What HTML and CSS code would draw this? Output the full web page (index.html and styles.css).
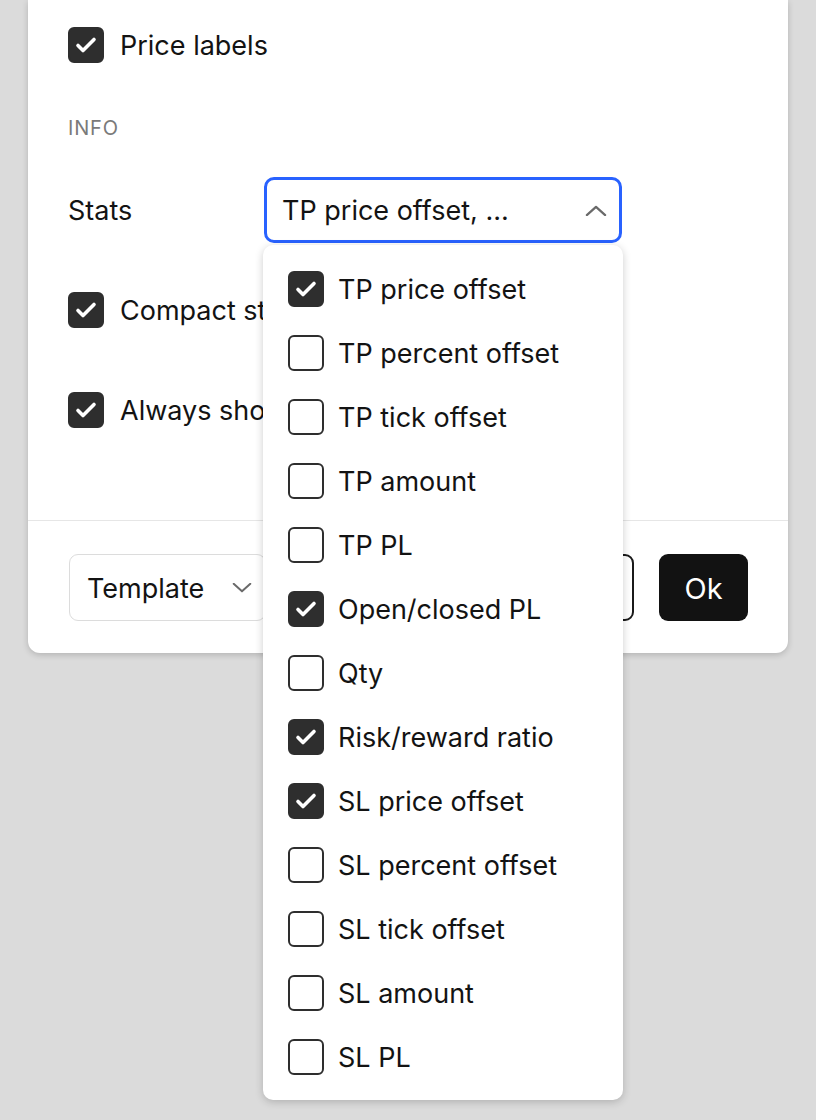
FILE: index.html
```html
<!DOCTYPE html>
<html>
<head>
<meta charset="utf-8">
<link rel="stylesheet" href="styles.css">
</head>
<body>
<div class="dialog">
  <div class="content">
    <label class="check-row row-first">
      <span class="cb checked"><svg viewBox="0 0 36 36"><path d="M10 18.5l5 5 11-11" /></svg></span>
      <span class="label">Price labels</span>
    </label>
    <div class="section-title">INFO</div>
    <div class="field-row">
      <span class="field-label">Stats</span>
      <div class="select-wrap">
        <div class="select open">
          <span class="select-value">TP price offset, ...</span>
          <svg class="chev" viewBox="0 0 24 12"><path d="M2 11l10-9 10 9" /></svg>
        </div>
        <div class="menu">
          <div class="item"><span class="cb checked"><svg viewBox="0 0 36 36"><path d="M10 18.5l5 5 11-11" /></svg></span><span class="label">TP price offset</span></div>
          <div class="item"><span class="cb"></span><span class="label">TP percent offset</span></div>
          <div class="item"><span class="cb"></span><span class="label">TP tick offset</span></div>
          <div class="item"><span class="cb"></span><span class="label">TP amount</span></div>
          <div class="item"><span class="cb"></span><span class="label">TP PL</span></div>
          <div class="item"><span class="cb checked"><svg viewBox="0 0 36 36"><path d="M10 18.5l5 5 11-11" /></svg></span><span class="label">Open/closed PL</span></div>
          <div class="item"><span class="cb"></span><span class="label">Qty</span></div>
          <div class="item"><span class="cb checked"><svg viewBox="0 0 36 36"><path d="M10 18.5l5 5 11-11" /></svg></span><span class="label">Risk/reward ratio</span></div>
          <div class="item"><span class="cb checked"><svg viewBox="0 0 36 36"><path d="M10 18.5l5 5 11-11" /></svg></span><span class="label">SL price offset</span></div>
          <div class="item"><span class="cb"></span><span class="label">SL percent offset</span></div>
          <div class="item"><span class="cb"></span><span class="label">SL tick offset</span></div>
          <div class="item"><span class="cb"></span><span class="label">SL amount</span></div>
          <div class="item"><span class="cb"></span><span class="label">SL PL</span></div>
        </div>
      </div>
    </div>
    <label class="check-row row-compact">
      <span class="cb checked"><svg viewBox="0 0 36 36"><path d="M10 18.5l5 5 11-11" /></svg></span>
      <span class="label">Compact stats mode</span>
    </label>
    <label class="check-row row-always">
      <span class="cb checked"><svg viewBox="0 0 36 36"><path d="M10 18.5l5 5 11-11" /></svg></span>
      <span class="label">Always show stats</span>
    </label>
  </div>
  <div class="footer">
    <div class="template">
      <span class="template-text">Template</span>
      <svg class="chev-down" viewBox="0 0 24 12"><path d="M2 1l10 9 10-9" /></svg>
    </div>
    <div class="actions">
      <button class="btn btn-cancel" aria-label="Cancel"></button>
      <button class="btn btn-ok">Ok</button>
    </div>
  </div>
</div>
</body>
</html>
```
FILE: styles.css
```css
html, body {
  margin: 0;
  padding: 0;
  background: #dbdbdb;
  height: 1120px;
  overflow: hidden;
}
body {
  font-family: Inter, "Noto Sans", "Liberation Sans", sans-serif;
  color: #131313;
}
.dialog {
  margin-left: 28px;
  width: 760px;
  background: #fff;
  border-radius: 0 0 12px 12px;
  box-shadow: 0 2px 6px rgba(0,0,0,0.18);
}
.content {
  padding: 27px 40px 92px 40px;
}
.check-row {
  display: flex;
  align-items: center;
  height: 36px;
}
.cb {
  flex: none;
  width: 36px;
  height: 36px;
  box-sizing: border-box;
  border: 2px solid #2e2e2e;
  border-radius: 6px;
  background: #fff;
  display: flex;
  align-items: center;
  justify-content: center;
}
.cb.checked {
  background: #2e2e2e;
}
.cb svg {
  width: 36px;
  height: 36px;
  flex: none;
}
.cb svg path {
  fill: none;
  stroke: #fff;
  stroke-width: 3.6;
  stroke-linecap: round;
  stroke-linejoin: round;
}
.label {
  font-size: 27px;
  line-height: 34px;
  padding-top: 2px;
  margin-left: 16px;
  white-space: nowrap;
}
.section-title {
  margin-top: 53px;
  font-size: 20px;
  line-height: 24px;
  color: #7a7a7a;
  letter-spacing: 0.8px;
}
.field-row {
  margin-top: 37px;
  display: flex;
  align-items: center;
  height: 66px;
}
.field-label {
  width: 196px;
  font-size: 27px;
  line-height: 34px;
  padding-top: 2px;
}
.select-wrap {
  position: relative;
  width: 358px;
}
.select {
  box-sizing: border-box;
  height: 66px;
  border: 3px solid #2962ff;
  border-radius: 10px;
  display: flex;
  align-items: center;
  justify-content: space-between;
  padding: 0 12px 0 15px;
  background: #fff;
}
.select-value {
  font-size: 27px;
  line-height: 34px;
  padding-top: 2px;
}
.chev {
  width: 22px;
  height: 11px;
}
.chev path, .chev-down path {
  fill: none;
  stroke: #6a6a6a;
  stroke-width: 2.4;
  stroke-linecap: round;
  stroke-linejoin: round;
}
.menu {
  position: absolute;
  z-index: 5;
  top: 68px;
  left: -1px;
  width: 360px;
  box-sizing: border-box;
  padding: 12px 0 11px 0;
  background: #fff;
  border-radius: 10px;
  box-shadow: 0 2px 8px rgba(0,0,0,0.2);
}
.item {
  display: flex;
  align-items: center;
  height: 64px;
  padding-left: 25px;
}
.item .label {
  margin-left: 14px;
}
.row-compact {
  margin-top: 49px;
}
.row-always {
  margin-top: 64px;
}
.footer {
  border-top: 1px solid #e6e6e6;
  padding: 33px 40px 32px 41px;
  display: flex;
  align-items: center;
  justify-content: space-between;
}
.template {
  box-sizing: border-box;
  width: 197px;
  height: 67px;
  border: 1px solid #dcdcdc;
  border-radius: 9px;
  display: flex;
  align-items: center;
  justify-content: space-between;
  padding: 0 13px 0 17px;
  font-size: 27px;
}
.template-text {
  padding-top: 2px;
}
.chev-down {
  width: 20px;
  height: 10px;
}
.actions {
  display: flex;
  gap: 25px;
}
.btn {
  font-family: inherit;
  font-size: 27px;
  height: 67px;
  box-sizing: border-box;
  border-radius: 9px;
  cursor: pointer;
}
.btn-cancel {
  width: 150px;
  background: #fff;
  border: 2px solid #1a1a1a;
  color: #131313;
}
.btn-ok {
  width: 89px;
  background: #121212;
  border: none;
  color: #fff;
  font-size: 29px;
  padding-top: 2px;
}
```
